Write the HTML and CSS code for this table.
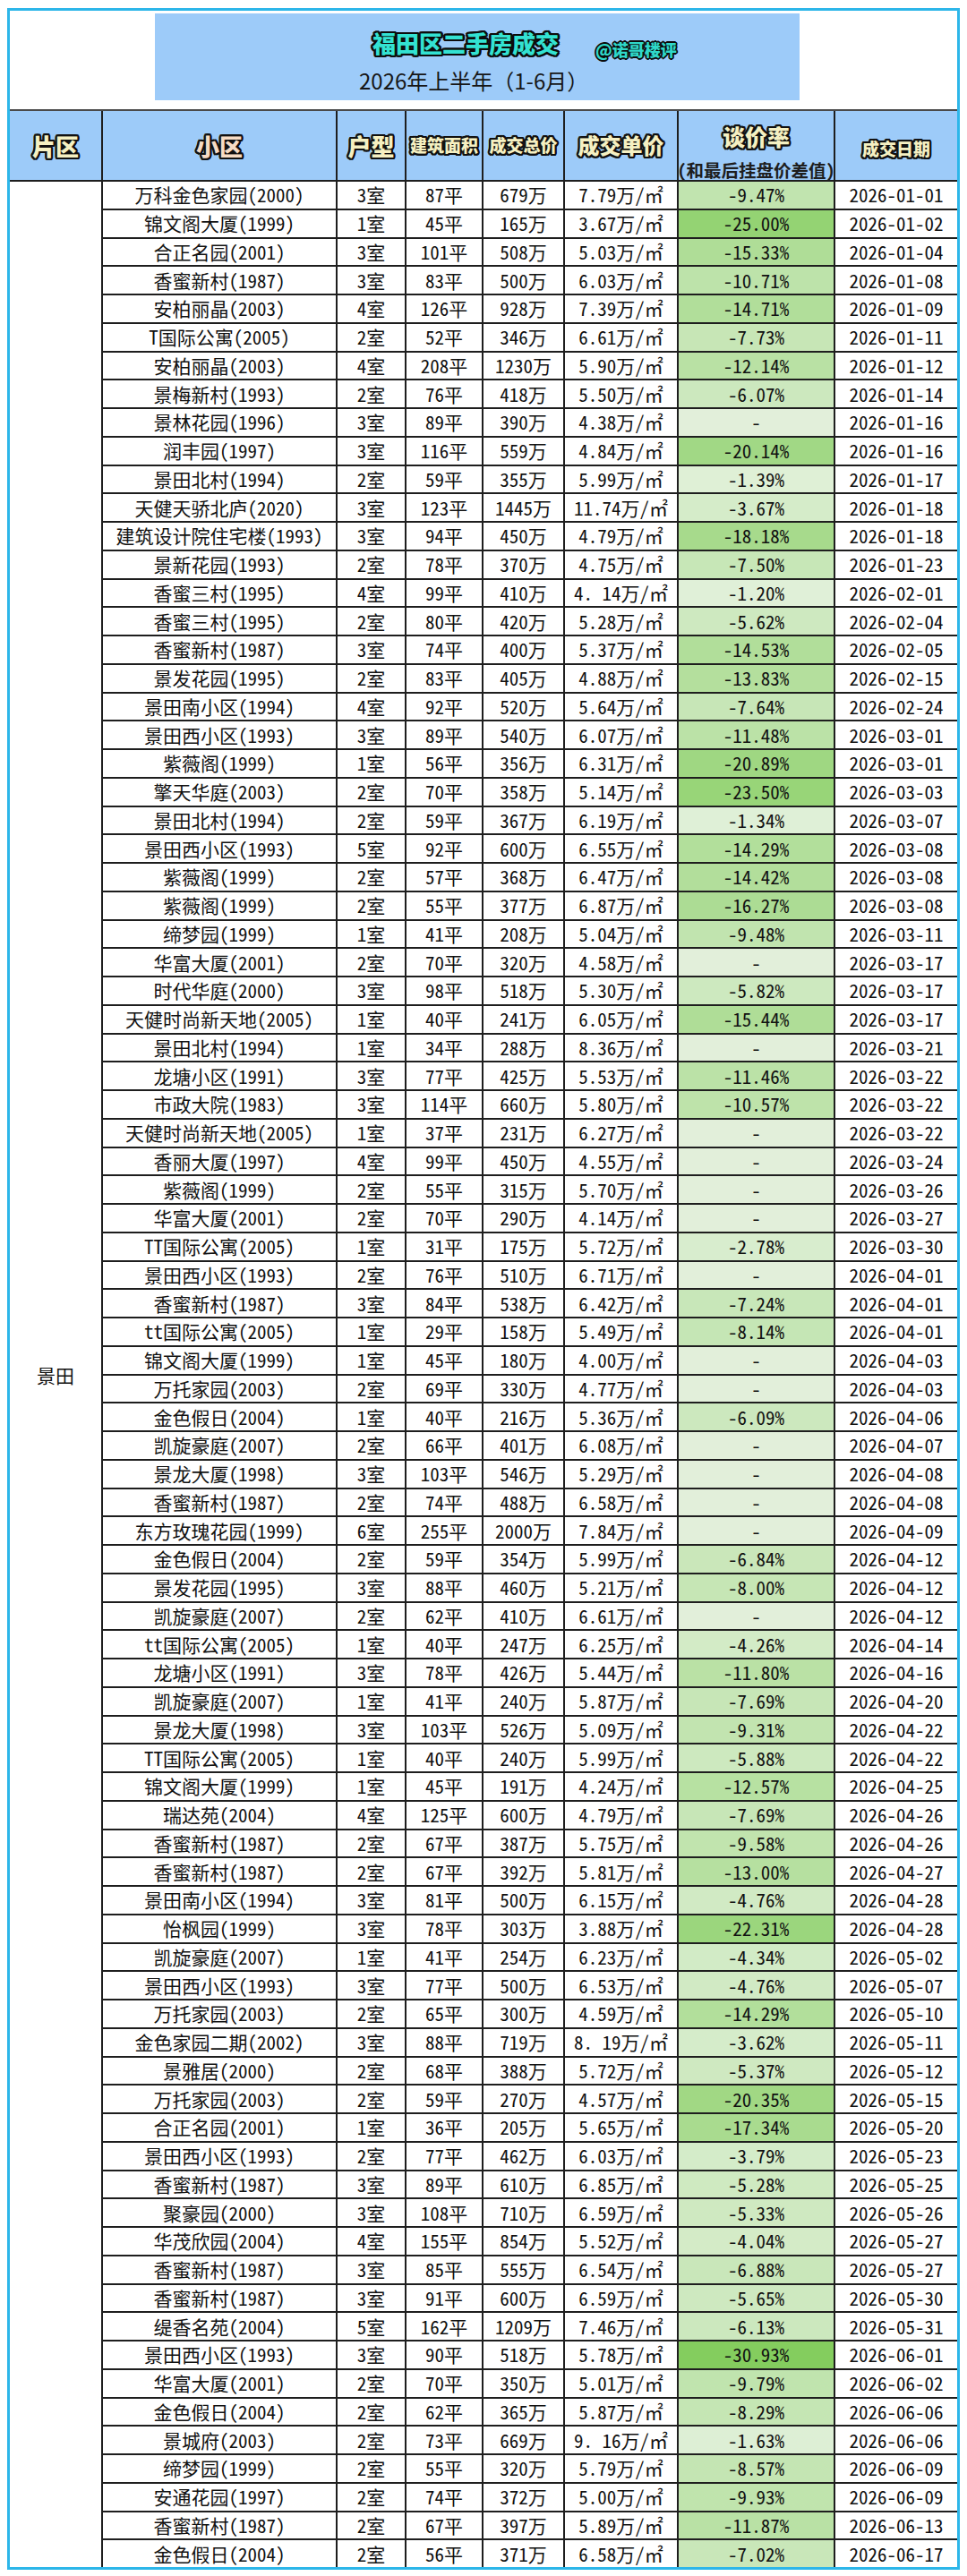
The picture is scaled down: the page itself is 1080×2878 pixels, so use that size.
FILE: index.html
```html
<!DOCTYPE html>
<html lang="zh-CN">
<head>
<meta charset="utf-8">
<title>福田区二手房成交</title>
<link rel="stylesheet" href="styles.css">
</head>
<body>
<div class="frame">
  <div class="title-area">
    <div class="title-box">
      <div class="t1"><span class="title">福田区二手房成交</span><span class="handle">@诺哥楼评</span></div>
      <div class="t2">2026年上半年（1-6月）</div>
    </div>
  </div>
  <div class="grid">
    <div class="h"><span class="ol s26">片区</span></div>
    <div class="h"><span class="ol s26 peach">小区</span></div>
    <div class="h"><span class="ol s26">户型</span></div>
    <div class="h"><span class="ol s19">建筑面积</span></div>
    <div class="h"><span class="ol s19">成交总价</span></div>
    <div class="h"><span class="ol s24">成交单价</span></div>
    <div class="h h-rate"><span class="ol s25">谈价率</span><span class="sub">(和最后挂盘价差值)</span></div>
    <div class="h h-date"><span class="ol s19">成交日期</span></div>

    <div class="area">景田</div>

    <div class="c">万科金色家园(2000)</div><div class="c">3室</div><div class="c">87平</div><div class="c">679万</div><div class="c">7.79万/㎡</div><div class="c r">-9.47%</div><div class="c">2026-01-01</div>
    <div class="c">锦文阁大厦(1999)</div><div class="c">1室</div><div class="c">45平</div><div class="c">165万</div><div class="c">3.67万/㎡</div><div class="c r">-25.00%</div><div class="c">2026-01-02</div>
    <div class="c">合正名园(2001)</div><div class="c">3室</div><div class="c">101平</div><div class="c">508万</div><div class="c">5.03万/㎡</div><div class="c r">-15.33%</div><div class="c">2026-01-04</div>
    <div class="c">香蜜新村(1987)</div><div class="c">3室</div><div class="c">83平</div><div class="c">500万</div><div class="c">6.03万/㎡</div><div class="c r">-10.71%</div><div class="c">2026-01-08</div>
    <div class="c">安柏丽晶(2003)</div><div class="c">4室</div><div class="c">126平</div><div class="c">928万</div><div class="c">7.39万/㎡</div><div class="c r">-14.71%</div><div class="c">2026-01-09</div>
    <div class="c">T国际公寓(2005)</div><div class="c">2室</div><div class="c">52平</div><div class="c">346万</div><div class="c">6.61万/㎡</div><div class="c r">-7.73%</div><div class="c">2026-01-11</div>
    <div class="c">安柏丽晶(2003)</div><div class="c">4室</div><div class="c">208平</div><div class="c">1230万</div><div class="c">5.90万/㎡</div><div class="c r">-12.14%</div><div class="c">2026-01-12</div>
    <div class="c">景梅新村(1993)</div><div class="c">2室</div><div class="c">76平</div><div class="c">418万</div><div class="c">5.50万/㎡</div><div class="c r">-6.07%</div><div class="c">2026-01-14</div>
    <div class="c">景林花园(1996)</div><div class="c">3室</div><div class="c">89平</div><div class="c">390万</div><div class="c">4.38万/㎡</div><div class="c r">-</div><div class="c">2026-01-16</div>
    <div class="c">润丰园(1997)</div><div class="c">3室</div><div class="c">116平</div><div class="c">559万</div><div class="c">4.84万/㎡</div><div class="c r">-20.14%</div><div class="c">2026-01-16</div>
    <div class="c">景田北村(1994)</div><div class="c">2室</div><div class="c">59平</div><div class="c">355万</div><div class="c">5.99万/㎡</div><div class="c r">-1.39%</div><div class="c">2026-01-17</div>
    <div class="c">天健天骄北庐(2020)</div><div class="c">3室</div><div class="c">123平</div><div class="c">1445万</div><div class="c">11.74万/㎡</div><div class="c r">-3.67%</div><div class="c">2026-01-18</div>
    <div class="c">建筑设计院住宅楼(1993)</div><div class="c">3室</div><div class="c">94平</div><div class="c">450万</div><div class="c">4.79万/㎡</div><div class="c r">-18.18%</div><div class="c">2026-01-18</div>
    <div class="c">景新花园(1993)</div><div class="c">2室</div><div class="c">78平</div><div class="c">370万</div><div class="c">4.75万/㎡</div><div class="c r">-7.50%</div><div class="c">2026-01-23</div>
    <div class="c">香蜜三村(1995)</div><div class="c">4室</div><div class="c">99平</div><div class="c">410万</div><div class="c">4. 14万/㎡</div><div class="c r">-1.20%</div><div class="c">2026-02-01</div>
    <div class="c">香蜜三村(1995)</div><div class="c">2室</div><div class="c">80平</div><div class="c">420万</div><div class="c">5.28万/㎡</div><div class="c r">-5.62%</div><div class="c">2026-02-04</div>
    <div class="c">香蜜新村(1987)</div><div class="c">3室</div><div class="c">74平</div><div class="c">400万</div><div class="c">5.37万/㎡</div><div class="c r">-14.53%</div><div class="c">2026-02-05</div>
    <div class="c">景发花园(1995)</div><div class="c">2室</div><div class="c">83平</div><div class="c">405万</div><div class="c">4.88万/㎡</div><div class="c r">-13.83%</div><div class="c">2026-02-15</div>
    <div class="c">景田南小区(1994)</div><div class="c">4室</div><div class="c">92平</div><div class="c">520万</div><div class="c">5.64万/㎡</div><div class="c r">-7.64%</div><div class="c">2026-02-24</div>
    <div class="c">景田西小区(1993)</div><div class="c">3室</div><div class="c">89平</div><div class="c">540万</div><div class="c">6.07万/㎡</div><div class="c r">-11.48%</div><div class="c">2026-03-01</div>
    <div class="c">紫薇阁(1999)</div><div class="c">1室</div><div class="c">56平</div><div class="c">356万</div><div class="c">6.31万/㎡</div><div class="c r">-20.89%</div><div class="c">2026-03-01</div>
    <div class="c">擎天华庭(2003)</div><div class="c">2室</div><div class="c">70平</div><div class="c">358万</div><div class="c">5.14万/㎡</div><div class="c r">-23.50%</div><div class="c">2026-03-03</div>
    <div class="c">景田北村(1994)</div><div class="c">2室</div><div class="c">59平</div><div class="c">367万</div><div class="c">6.19万/㎡</div><div class="c r">-1.34%</div><div class="c">2026-03-07</div>
    <div class="c">景田西小区(1993)</div><div class="c">5室</div><div class="c">92平</div><div class="c">600万</div><div class="c">6.55万/㎡</div><div class="c r">-14.29%</div><div class="c">2026-03-08</div>
    <div class="c">紫薇阁(1999)</div><div class="c">2室</div><div class="c">57平</div><div class="c">368万</div><div class="c">6.47万/㎡</div><div class="c r">-14.42%</div><div class="c">2026-03-08</div>
    <div class="c">紫薇阁(1999)</div><div class="c">2室</div><div class="c">55平</div><div class="c">377万</div><div class="c">6.87万/㎡</div><div class="c r">-16.27%</div><div class="c">2026-03-08</div>
    <div class="c">缔梦园(1999)</div><div class="c">1室</div><div class="c">41平</div><div class="c">208万</div><div class="c">5.04万/㎡</div><div class="c r">-9.48%</div><div class="c">2026-03-11</div>
    <div class="c">华富大厦(2001)</div><div class="c">2室</div><div class="c">70平</div><div class="c">320万</div><div class="c">4.58万/㎡</div><div class="c r">-</div><div class="c">2026-03-17</div>
    <div class="c">时代华庭(2000)</div><div class="c">3室</div><div class="c">98平</div><div class="c">518万</div><div class="c">5.30万/㎡</div><div class="c r">-5.82%</div><div class="c">2026-03-17</div>
    <div class="c">天健时尚新天地(2005)</div><div class="c">1室</div><div class="c">40平</div><div class="c">241万</div><div class="c">6.05万/㎡</div><div class="c r">-15.44%</div><div class="c">2026-03-17</div>
    <div class="c">景田北村(1994)</div><div class="c">1室</div><div class="c">34平</div><div class="c">288万</div><div class="c">8.36万/㎡</div><div class="c r">-</div><div class="c">2026-03-21</div>
    <div class="c">龙塘小区(1991)</div><div class="c">3室</div><div class="c">77平</div><div class="c">425万</div><div class="c">5.53万/㎡</div><div class="c r">-11.46%</div><div class="c">2026-03-22</div>
    <div class="c">市政大院(1983)</div><div class="c">3室</div><div class="c">114平</div><div class="c">660万</div><div class="c">5.80万/㎡</div><div class="c r">-10.57%</div><div class="c">2026-03-22</div>
    <div class="c">天健时尚新天地(2005)</div><div class="c">1室</div><div class="c">37平</div><div class="c">231万</div><div class="c">6.27万/㎡</div><div class="c r">-</div><div class="c">2026-03-22</div>
    <div class="c">香丽大厦(1997)</div><div class="c">4室</div><div class="c">99平</div><div class="c">450万</div><div class="c">4.55万/㎡</div><div class="c r">-</div><div class="c">2026-03-24</div>
    <div class="c">紫薇阁(1999)</div><div class="c">2室</div><div class="c">55平</div><div class="c">315万</div><div class="c">5.70万/㎡</div><div class="c r">-</div><div class="c">2026-03-26</div>
    <div class="c">华富大厦(2001)</div><div class="c">2室</div><div class="c">70平</div><div class="c">290万</div><div class="c">4.14万/㎡</div><div class="c r">-</div><div class="c">2026-03-27</div>
    <div class="c">TT国际公寓(2005)</div><div class="c">1室</div><div class="c">31平</div><div class="c">175万</div><div class="c">5.72万/㎡</div><div class="c r">-2.78%</div><div class="c">2026-03-30</div>
    <div class="c">景田西小区(1993)</div><div class="c">2室</div><div class="c">76平</div><div class="c">510万</div><div class="c">6.71万/㎡</div><div class="c r">-</div><div class="c">2026-04-01</div>
    <div class="c">香蜜新村(1987)</div><div class="c">3室</div><div class="c">84平</div><div class="c">538万</div><div class="c">6.42万/㎡</div><div class="c r">-7.24%</div><div class="c">2026-04-01</div>
    <div class="c">tt国际公寓(2005)</div><div class="c">1室</div><div class="c">29平</div><div class="c">158万</div><div class="c">5.49万/㎡</div><div class="c r">-8.14%</div><div class="c">2026-04-01</div>
    <div class="c">锦文阁大厦(1999)</div><div class="c">1室</div><div class="c">45平</div><div class="c">180万</div><div class="c">4.00万/㎡</div><div class="c r">-</div><div class="c">2026-04-03</div>
    <div class="c">万托家园(2003)</div><div class="c">2室</div><div class="c">69平</div><div class="c">330万</div><div class="c">4.77万/㎡</div><div class="c r">-</div><div class="c">2026-04-03</div>
    <div class="c">金色假日(2004)</div><div class="c">1室</div><div class="c">40平</div><div class="c">216万</div><div class="c">5.36万/㎡</div><div class="c r">-6.09%</div><div class="c">2026-04-06</div>
    <div class="c">凯旋豪庭(2007)</div><div class="c">2室</div><div class="c">66平</div><div class="c">401万</div><div class="c">6.08万/㎡</div><div class="c r">-</div><div class="c">2026-04-07</div>
    <div class="c">景龙大厦(1998)</div><div class="c">3室</div><div class="c">103平</div><div class="c">546万</div><div class="c">5.29万/㎡</div><div class="c r">-</div><div class="c">2026-04-08</div>
    <div class="c">香蜜新村(1987)</div><div class="c">2室</div><div class="c">74平</div><div class="c">488万</div><div class="c">6.58万/㎡</div><div class="c r">-</div><div class="c">2026-04-08</div>
    <div class="c">东方玫瑰花园(1999)</div><div class="c">6室</div><div class="c">255平</div><div class="c">2000万</div><div class="c">7.84万/㎡</div><div class="c r">-</div><div class="c">2026-04-09</div>
    <div class="c">金色假日(2004)</div><div class="c">2室</div><div class="c">59平</div><div class="c">354万</div><div class="c">5.99万/㎡</div><div class="c r">-6.84%</div><div class="c">2026-04-12</div>
    <div class="c">景发花园(1995)</div><div class="c">3室</div><div class="c">88平</div><div class="c">460万</div><div class="c">5.21万/㎡</div><div class="c r">-8.00%</div><div class="c">2026-04-12</div>
    <div class="c">凯旋豪庭(2007)</div><div class="c">2室</div><div class="c">62平</div><div class="c">410万</div><div class="c">6.61万/㎡</div><div class="c r">-</div><div class="c">2026-04-12</div>
    <div class="c">tt国际公寓(2005)</div><div class="c">1室</div><div class="c">40平</div><div class="c">247万</div><div class="c">6.25万/㎡</div><div class="c r">-4.26%</div><div class="c">2026-04-14</div>
    <div class="c">龙塘小区(1991)</div><div class="c">3室</div><div class="c">78平</div><div class="c">426万</div><div class="c">5.44万/㎡</div><div class="c r">-11.80%</div><div class="c">2026-04-16</div>
    <div class="c">凯旋豪庭(2007)</div><div class="c">1室</div><div class="c">41平</div><div class="c">240万</div><div class="c">5.87万/㎡</div><div class="c r">-7.69%</div><div class="c">2026-04-20</div>
    <div class="c">景龙大厦(1998)</div><div class="c">3室</div><div class="c">103平</div><div class="c">526万</div><div class="c">5.09万/㎡</div><div class="c r">-9.31%</div><div class="c">2026-04-22</div>
    <div class="c">TT国际公寓(2005)</div><div class="c">1室</div><div class="c">40平</div><div class="c">240万</div><div class="c">5.99万/㎡</div><div class="c r">-5.88%</div><div class="c">2026-04-22</div>
    <div class="c">锦文阁大厦(1999)</div><div class="c">1室</div><div class="c">45平</div><div class="c">191万</div><div class="c">4.24万/㎡</div><div class="c r">-12.57%</div><div class="c">2026-04-25</div>
    <div class="c">瑞达苑(2004)</div><div class="c">4室</div><div class="c">125平</div><div class="c">600万</div><div class="c">4.79万/㎡</div><div class="c r">-7.69%</div><div class="c">2026-04-26</div>
    <div class="c">香蜜新村(1987)</div><div class="c">2室</div><div class="c">67平</div><div class="c">387万</div><div class="c">5.75万/㎡</div><div class="c r">-9.58%</div><div class="c">2026-04-26</div>
    <div class="c">香蜜新村(1987)</div><div class="c">2室</div><div class="c">67平</div><div class="c">392万</div><div class="c">5.81万/㎡</div><div class="c r">-13.00%</div><div class="c">2026-04-27</div>
    <div class="c">景田南小区(1994)</div><div class="c">3室</div><div class="c">81平</div><div class="c">500万</div><div class="c">6.15万/㎡</div><div class="c r">-4.76%</div><div class="c">2026-04-28</div>
    <div class="c">怡枫园(1999)</div><div class="c">3室</div><div class="c">78平</div><div class="c">303万</div><div class="c">3.88万/㎡</div><div class="c r">-22.31%</div><div class="c">2026-04-28</div>
    <div class="c">凯旋豪庭(2007)</div><div class="c">1室</div><div class="c">41平</div><div class="c">254万</div><div class="c">6.23万/㎡</div><div class="c r">-4.34%</div><div class="c">2026-05-02</div>
    <div class="c">景田西小区(1993)</div><div class="c">3室</div><div class="c">77平</div><div class="c">500万</div><div class="c">6.53万/㎡</div><div class="c r">-4.76%</div><div class="c">2026-05-07</div>
    <div class="c">万托家园(2003)</div><div class="c">2室</div><div class="c">65平</div><div class="c">300万</div><div class="c">4.59万/㎡</div><div class="c r">-14.29%</div><div class="c">2026-05-10</div>
    <div class="c">金色家园二期(2002)</div><div class="c">3室</div><div class="c">88平</div><div class="c">719万</div><div class="c">8. 19万/㎡</div><div class="c r">-3.62%</div><div class="c">2026-05-11</div>
    <div class="c">景雅居(2000)</div><div class="c">2室</div><div class="c">68平</div><div class="c">388万</div><div class="c">5.72万/㎡</div><div class="c r">-5.37%</div><div class="c">2026-05-12</div>
    <div class="c">万托家园(2003)</div><div class="c">2室</div><div class="c">59平</div><div class="c">270万</div><div class="c">4.57万/㎡</div><div class="c r">-20.35%</div><div class="c">2026-05-15</div>
    <div class="c">合正名园(2001)</div><div class="c">1室</div><div class="c">36平</div><div class="c">205万</div><div class="c">5.65万/㎡</div><div class="c r">-17.34%</div><div class="c">2026-05-20</div>
    <div class="c">景田西小区(1993)</div><div class="c">2室</div><div class="c">77平</div><div class="c">462万</div><div class="c">6.03万/㎡</div><div class="c r">-3.79%</div><div class="c">2026-05-23</div>
    <div class="c">香蜜新村(1987)</div><div class="c">3室</div><div class="c">89平</div><div class="c">610万</div><div class="c">6.85万/㎡</div><div class="c r">-5.28%</div><div class="c">2026-05-25</div>
    <div class="c">聚豪园(2000)</div><div class="c">3室</div><div class="c">108平</div><div class="c">710万</div><div class="c">6.59万/㎡</div><div class="c r">-5.33%</div><div class="c">2026-05-26</div>
    <div class="c">华茂欣园(2004)</div><div class="c">4室</div><div class="c">155平</div><div class="c">854万</div><div class="c">5.52万/㎡</div><div class="c r">-4.04%</div><div class="c">2026-05-27</div>
    <div class="c">香蜜新村(1987)</div><div class="c">3室</div><div class="c">85平</div><div class="c">555万</div><div class="c">6.54万/㎡</div><div class="c r">-6.88%</div><div class="c">2026-05-27</div>
    <div class="c">香蜜新村(1987)</div><div class="c">3室</div><div class="c">91平</div><div class="c">600万</div><div class="c">6.59万/㎡</div><div class="c r">-5.65%</div><div class="c">2026-05-30</div>
    <div class="c">缇香名苑(2004)</div><div class="c">5室</div><div class="c">162平</div><div class="c">1209万</div><div class="c">7.46万/㎡</div><div class="c r">-6.13%</div><div class="c">2026-05-31</div>
    <div class="c">景田西小区(1993)</div><div class="c">3室</div><div class="c">90平</div><div class="c">518万</div><div class="c">5.78万/㎡</div><div class="c r">-30.93%</div><div class="c">2026-06-01</div>
    <div class="c">华富大厦(2001)</div><div class="c">2室</div><div class="c">70平</div><div class="c">350万</div><div class="c">5.01万/㎡</div><div class="c r">-9.79%</div><div class="c">2026-06-02</div>
    <div class="c">金色假日(2004)</div><div class="c">2室</div><div class="c">62平</div><div class="c">365万</div><div class="c">5.87万/㎡</div><div class="c r">-8.29%</div><div class="c">2026-06-06</div>
    <div class="c">景城府(2003)</div><div class="c">2室</div><div class="c">73平</div><div class="c">669万</div><div class="c">9. 16万/㎡</div><div class="c r">-1.63%</div><div class="c">2026-06-06</div>
    <div class="c">缔梦园(1999)</div><div class="c">2室</div><div class="c">55平</div><div class="c">320万</div><div class="c">5.79万/㎡</div><div class="c r">-8.57%</div><div class="c">2026-06-09</div>
    <div class="c">安通花园(1997)</div><div class="c">2室</div><div class="c">74平</div><div class="c">372万</div><div class="c">5.00万/㎡</div><div class="c r">-9.93%</div><div class="c">2026-06-09</div>
    <div class="c">香蜜新村(1987)</div><div class="c">2室</div><div class="c">67平</div><div class="c">397万</div><div class="c">5.89万/㎡</div><div class="c r">-11.87%</div><div class="c">2026-06-13</div>
    <div class="c">金色假日(2004)</div><div class="c">2室</div><div class="c">56平</div><div class="c">371万</div><div class="c">6.58万/㎡</div><div class="c r">-7.02%</div><div class="c">2026-06-17</div>
  </div>
</div>
<script src="app.js"></script>
</body>
</html>
```

FILE: styles.css
```css
html, body {
  margin: 0;
  padding: 0;
  background: #ffffff;
}

body {
  font-family: "Noto Sans CJK SC", "Noto Sans", sans-serif;
  color: #111111;
}

.frame {
  margin: 9px 0 0 8px;
  width: 1058px;
  border: 3px solid #2db6e9;
  background: #ffffff;
}

.title-area {
  height: 110px;
  padding-top: 3px;
  box-sizing: border-box;
}

.title-box {
  margin-left: 162px;
  width: 720px;
  height: 97px;
  background: #9dcbf9;
  box-sizing: border-box;
  padding-top: 18px;
}

.t1 {
  display: flex;
  align-items: flex-start;
  padding-left: 243px;
  height: 30px;
}

.title {
  font-size: 26px;
  line-height: 30px;
  font-weight: 900;
  color: #33e2d2;
  text-shadow:
    2px 0 0 #0c0c0c, -2px 0 0 #0c0c0c, 0 2px 0 #0c0c0c, 0 -2px 0 #0c0c0c,
    1.6px 1.6px 0 #0c0c0c, -1.6px 1.6px 0 #0c0c0c, 1.6px -1.6px 0 #0c0c0c, -1.6px -1.6px 0 #0c0c0c,
    2.4px 1px 0 #0c0c0c, -2.4px 1px 0 #0c0c0c, 2.4px -1px 0 #0c0c0c, -2.4px -1px 0 #0c0c0c,
    1px 2.4px 0 #0c0c0c, -1px 2.4px 0 #0c0c0c, 1px -2.4px 0 #0c0c0c, -1px -2.4px 0 #0c0c0c;
}

.handle {
  margin-left: 41px;
  margin-top: 11px;
  font-size: 18px;
  line-height: 22px;
  font-weight: 900;
  color: #2fd8c9;
  text-shadow:
    1.8px 0 0 #0c0c0c, -1.8px 0 0 #0c0c0c, 0 1.8px 0 #0c0c0c, 0 -1.8px 0 #0c0c0c,
    1.3px 1.3px 0 #0c0c0c, -1.3px 1.3px 0 #0c0c0c, 1.3px -1.3px 0 #0c0c0c, -1.3px -1.3px 0 #0c0c0c;
}

.t2 {
  margin-top: 12px;
  padding-left: 228px;
  font-size: 24px;
  line-height: 30px;
  color: #161616;
  white-space: nowrap;
}

.grid {
  display: grid;
  grid-template-columns: 102px 260px 75px 84px 89px 125px 173px 136px;
  grid-template-rows: 77px repeat(84, 29.75px);
  gap: 2px;
  background: #1e1e1e;
  border-top: 2px solid #4a4a4a;
}

.h {
  background: #9dcbf9;
  display: flex;
  align-items: center;
  justify-content: center;
  white-space: nowrap;
}

.ol {
  font-weight: 900;
  color: #f5f0c2;
  line-height: 1.2;
  text-shadow:
    2.2px 0 0 #111, -2.2px 0 0 #111, 0 2.2px 0 #111, 0 -2.2px 0 #111,
    1.6px 1.6px 0 #111, -1.6px 1.6px 0 #111, 1.6px -1.6px 0 #111, -1.6px -1.6px 0 #111,
    2px 1px 0 #111, -2px 1px 0 #111, 2px -1px 0 #111, -2px -1px 0 #111,
    1px 2px 0 #111, -1px 2px 0 #111, 1px -2px 0 #111, -1px -2px 0 #111;
}

.peach {
  color: #f7dcc5;
}

.s26 { font-size: 26px; }
.s25 { font-size: 25px; }
.s24 { font-size: 24px; }
.s19 { font-size: 19px; }

.h-rate {
  flex-direction: column;
  justify-content: flex-start;
  padding-top: 12px;
  box-sizing: border-box;
}

.h-rate .ol {
  line-height: 32px;
}

.sub {
  margin-top: 11px;
  font-size: 19.5px;
  line-height: 22px;
  font-weight: 700;
  color: #1e1e1e;
  font-feature-settings: "hwid" 1;
}

.h-date {
  padding-top: 8px;
  box-sizing: border-box;
}

.area {
  grid-column: 1;
  grid-row: 2 / span 84;
  background: #ffffff;
  display: flex;
  align-items: center;
  justify-content: center;
  font-size: 21px;
}

.c {
  background: #ffffff;
  display: flex;
  align-items: center;
  justify-content: center;
  font-size: 21px;
  line-height: 1;
  white-space: pre;
  font-feature-settings: "hwid" 1;
}
```

FILE: app.js
```js
(function () {
  var light = [224, 240, 216];
  var dark = [132, 205, 94];
  var empty = [226, 239, 218];
  var minV = 1.2, maxV = 30.93;
  var cells = document.querySelectorAll('.r');
  for (var i = 0; i < cells.length; i++) {
    var el = cells[i];
    var m = el.textContent.match(/[\d.]+/);
    var c;
    if (!m) {
      c = empty;
    } else {
      var v = parseFloat(m[0]);
      var t = (v - minV) / (maxV - minV);
      if (t < 0) t = 0;
      if (t > 1) t = 1;
      t = Math.pow(t, 0.85);
      c = [
        Math.round(light[0] + (dark[0] - light[0]) * t),
        Math.round(light[1] + (dark[1] - light[1]) * t),
        Math.round(light[2] + (dark[2] - light[2]) * t)
      ];
    }
    el.style.backgroundColor = 'rgb(' + c[0] + ',' + c[1] + ',' + c[2] + ')';
  }
})();
```
